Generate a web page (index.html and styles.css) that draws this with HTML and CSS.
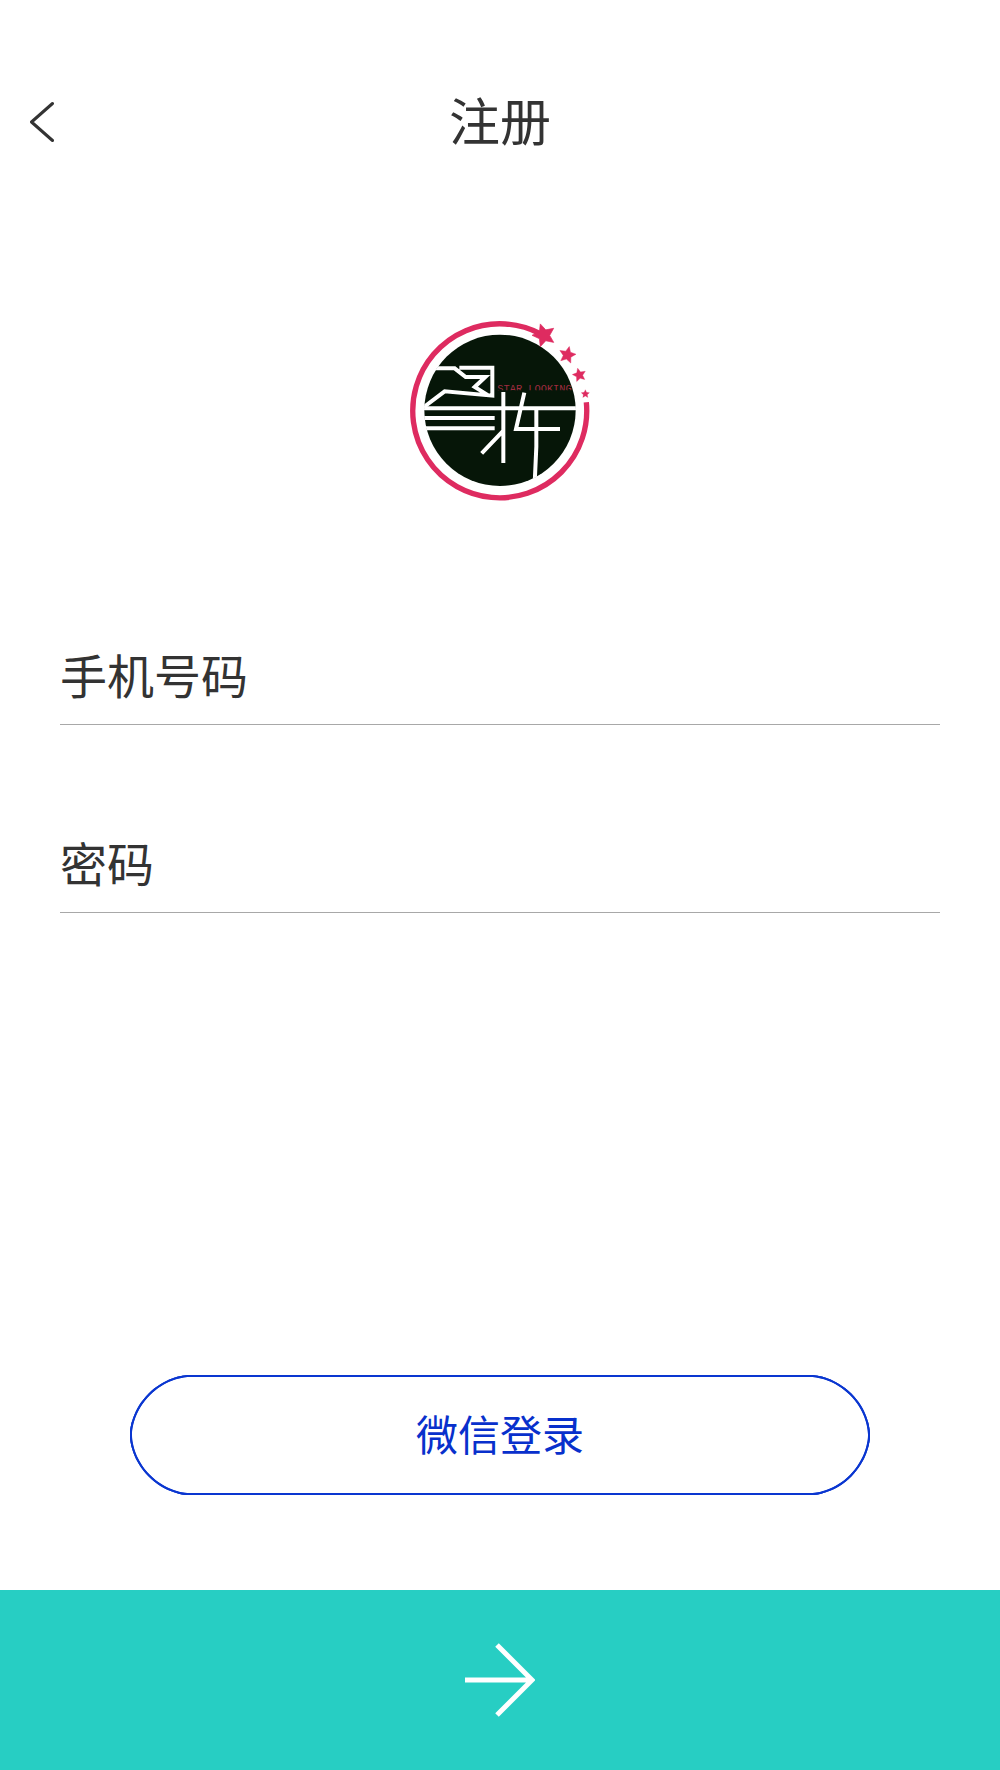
FILE: index.html
```html
<!DOCTYPE html>
<html lang="zh-CN">
<head>
<meta charset="utf-8">
<meta name="viewport" content="width=device-width, initial-scale=1">
<title>注册</title>
<link rel="stylesheet" href="styles.css">
</head>
<body>
<form class="page">
  <header class="header">
    <button class="back" type="button" aria-label="返回">
      <svg width="24" height="42" viewBox="0 0 24 42" fill="none" stroke="#333" stroke-width="3" stroke-linecap="round" stroke-linejoin="round"><path d="M22.500 2.500L1.500 21 22.500 39.500"/></svg>
    </button>
    <h1 class="title">注册</h1>
  </header>
  <main class="content">
    <svg class="logo" viewBox="0 0 600 600" role="img" aria-label="Star Looking">
      <defs>
        <clipPath id="disc"><circle cx="300" cy="301" r="228"/></clipPath>
        <clipPath id="caption"><path d="M285 215H520V241H285Z"/></clipPath>
        <path id="star" d="M0-10L2.800-3.900 9.500-3.100 4.500 1.500 5.900 8.100 0 4.800-5.900 8.100-4.500 1.500-9.500-3.100-2.800-3.900Z"/>
      </defs>
      <path d="M420 71A261 261 0 1 0 559 277" fill="none" stroke="#de2b60" stroke-width="16"/>
      <circle cx="300" cy="301" r="227" fill="#061608"/>
      <g clip-path="url(#disc)" fill="none" stroke="#fff" stroke-width="12">
        <path d="M100 175H164L197 201H256L224 231 266 257M178 173H277V257L134 244 72 291"/>
        <path d="M60 295H540M60 324H284M60 355H284M310 246V459M308 364L245 430M373 248L348 357H480M409 295V410L404 520"/>
      </g>
      <text class="logo-text" x="292" y="246" clip-path="url(#caption)">STAR LOOKING</text>
      <g fill="#de2b60" stroke="#de2b60" stroke-width="0.500">
        <use href="#star" transform="translate(432 76) rotate(-18) scale(3.600)"/>
        <use href="#star" transform="translate(502 135) rotate(13) scale(2.600)"/>
        <use href="#star" transform="translate(538 195) rotate(-14) scale(2.100)"/>
        <use href="#star" transform="translate(556 252) scale(1.300)"/>
      </g>
    </svg>
    <div class="fields">
      <input class="field" type="tel" placeholder="手机号码" aria-label="手机号码">
      <input class="field" type="password" placeholder="密码" aria-label="密码">
    </div>
    <button class="wechat" type="button">微信登录</button>
  </main>
  <button class="next" type="submit" aria-label="下一步">
    <svg width="70" height="76" viewBox="0 0 70 76" fill="none" stroke="#fff" stroke-width="5"><path d="M0 38H66M32 3L67 38 32 73"/></svg>
  </button>
</form>
</body>
</html>
```
FILE: styles.css
```css
* {
  box-sizing: border-box;
}

body {
  margin: 0;
  background: #fff;
  color: #333;
  font-family: "Noto Sans CJK SC", sans-serif;
}

button,
input {
  margin: 0;
  padding: 0;
  border: 0;
  border-radius: 0;
  background: none;
  color: inherit;
  font: inherit;
}

.page {
  display: flex;
  flex-direction: column;
  min-height: 100vh;
}

.header {
  display: grid;
  grid-template-columns: 100px 1fr 100px;
  align-items: center;
  height: 100px;
  margin-top: 72px;
}

.back {
  display: flex;
  align-items: center;
  height: 100px;
  padding-left: 30px;
}

.title {
  margin: 0;
  padding-bottom: 6px;
  font-size: 51px;
  font-weight: 400;
  line-height: 80px;
  text-align: center;
}

.content {
  display: flex;
  flex: 1;
  flex-direction: column;
  align-items: center;
  padding: 138px 60px 95px;
}

.logo {
  width: 200px;
  height: 200px;
}

.logo-text {
  fill: #a02c40;
  font-family: "Liberation Mono", monospace;
  font-size: 31px;
}

.fields {
  display: flex;
  flex-direction: column;
  gap: 94px;
  width: 100%;
  margin: 121px 0 60px;
}

.field {
  width: 100%;
  height: 94px;
  padding-bottom: 8px;
  border-bottom: 1px solid #a8a8a8;
  font-size: 47px;
}

.field::placeholder {
  color: #333;
  opacity: 1;
}

.wechat {
  width: 84%;
  height: 120px;
  margin-top: auto;
  padding-bottom: 6px;
  border: 2px solid #0a36d0;
  border-radius: 60px;
  corner-shape: superellipse(0.9);
  color: #0830cc;
  font-size: 42px;
}

.next {
  display: flex;
  align-items: center;
  justify-content: center;
  height: 180px;
  background: #27cec3;
}
```
